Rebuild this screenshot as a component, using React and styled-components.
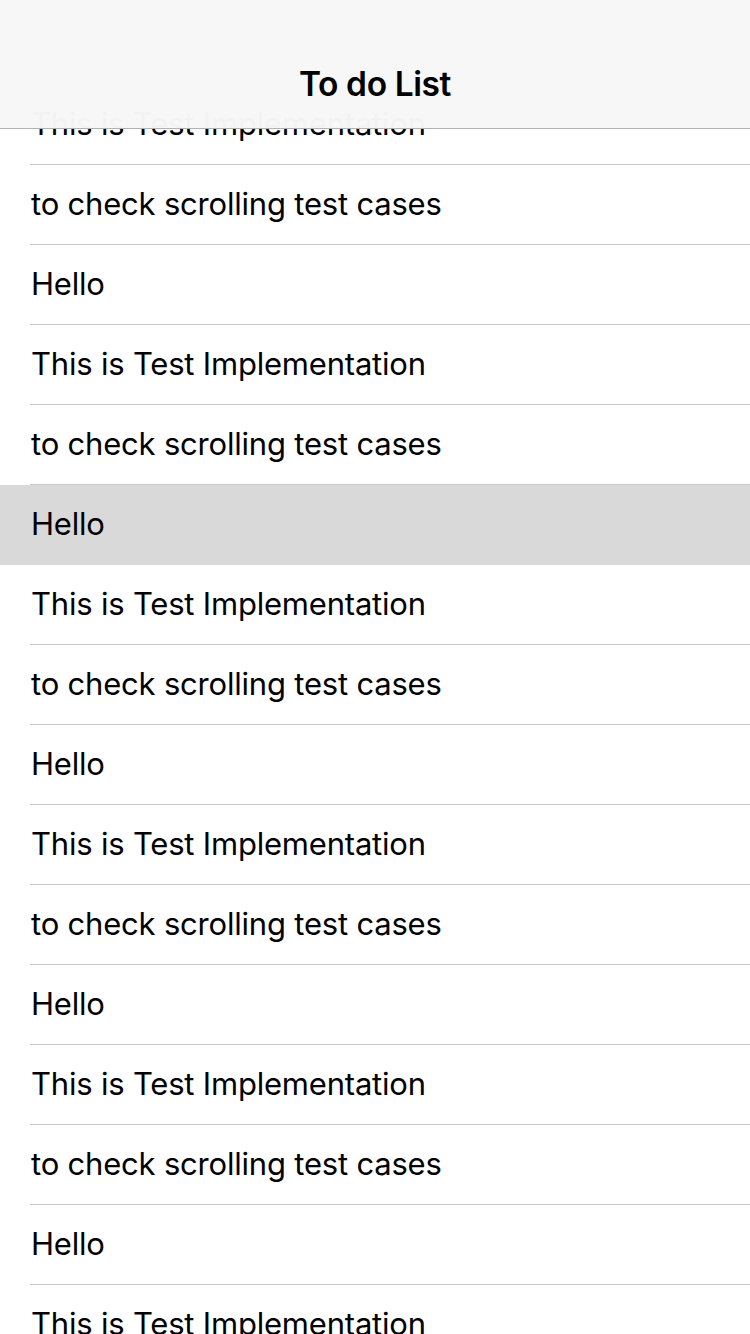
import React from 'react'
import styled, { createGlobalStyle } from 'styled-components'

const GlobalStyle = createGlobalStyle`
  html, body {
    margin: 0;
    padding: 0;
    background: #ffffff;
  }
  body {
    font-family: Inter, 'Noto Sans', sans-serif;
    -webkit-font-smoothing: antialiased;
  }
`

const items = ['This is Test Implementation', 'to check scrolling test cases', 'Hello']

function App() {
  const rows = []
  for (let i = 0; i < 16; i++) rows.push(items[i % 3])

  return (
    <Screen>
      <GlobalStyle />
      <NavBar>
        <Title>To do List</Title>
      </NavBar>
      <List>
        {rows.map((text, i) => (
          <Row key={i} selected={i === 5}>
            <Label>{text}</Label>
          </Row>
        ))}
      </List>
    </Screen>
  )
}

const Screen = styled.div`
  position: relative;
  width: 750px;
  height: 1334px;
  overflow: hidden;
  background: #ffffff;
`

const NavBar = styled.div`
  position: absolute;
  top: 0;
  left: 0;
  right: 0;
  height: 129px;
  box-sizing: border-box;
  padding-top: 40px;
  display: flex;
  align-items: center;
  justify-content: center;
  background: rgba(247, 247, 247, 0.98);
  border-bottom: 1px solid #b2b2b2;
  z-index: 2;
`

const Title = styled.h1`
  margin: 0;
  font-family: Inter, 'Noto Sans', sans-serif;
  font-size: 33.5px;
  font-weight: 600;
  color: #000000;
  letter-spacing: -0.4px;
`

const List = styled.div`
  display: flex;
  flex-direction: column;
  padding-top: 85px;
`

const Row = styled.div`
  position: relative;
  height: 80px;
  box-sizing: border-box;
  padding: 0 0 3px 31px;
  display: flex;
  align-items: center;
  background: ${(p) => (p.selected ? '#d9d9d9' : '#ffffff')};

  &::after {
    content: '';
    position: absolute;
    left: 30px;
    right: 0;
    bottom: 0;
    height: 1px;
    background: #c8c7cc;
    display: ${(p) => (p.selected ? 'none' : 'block')};
  }
`

const Label = styled.span`
  font-family: Inter, 'Noto Sans', sans-serif;
  font-size: 31px;
  color: #000000;
  letter-spacing: -0.2px;
`

export default App
